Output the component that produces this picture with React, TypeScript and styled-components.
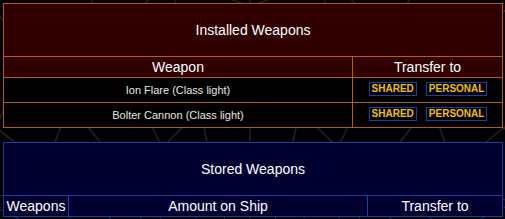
import styled, { createGlobalStyle } from "styled-components";

const GlobalStyle = createGlobalStyle`
  html, body {
    margin: 0;
    padding: 0;
    background: #000000;
  }
  body {
    font-family: "Liberation Sans", Arial, sans-serif;
    color: #ffffff;
  }
`;

const installed = [
  { name: "Ion Flare", size: "light" },
  { name: "Bolter Cannon", size: "light" },
];

const Page = styled.div`
  position: relative;
  width: 505px;
  height: 219px;
  padding: 3px;
  box-sizing: border-box;
  overflow: hidden;
`;

const Web = styled.svg`
  position: absolute;
  inset: 0;
  z-index: 0;
`;

const Content = styled.div`
  position: relative;
  z-index: 1;
  display: flex;
  flex-direction: column;
  gap: 14px;
`;

const Table = styled.table<{ $tone: "red" | "blue" }>`
  width: 500px;
  border-collapse: collapse;
  table-layout: fixed;
  background: ${(p) => (p.$tone === "red" ? "#300000" : "#000030")};
  border: 1px solid ${(p) => (p.$tone === "red" ? "#b4600c" : "#1440a8")};

  th,
  td {
    border: 1px solid ${(p) => (p.$tone === "red" ? "#b4600c" : "#1440a8")};
    padding: 0;
    text-align: center;
    font-weight: normal;
  }
`;

const Title = styled.th`
  height: 52px;
  font-size: 14px;
  padding-top: 2px;
`;

const Head = styled.th`
  height: 20px;
  font-size: 14px;
`;

const Row = styled.tr`
  background: #000000;
`;

const Cell = styled.td`
  height: 24px;
  font-size: 11px;
  color: #e6e6e6;
`;

const Buttons = styled.div`
  display: flex;
  justify-content: center;
  gap: 9px;
  padding-left: 1px;
  margin-top: -2px;
`;

const Button = styled.button`
  height: 14px;
  padding: 0 2px;
  background: #000000;
  border: 1px solid #1440a8;
  color: #f0c000;
  font-family: "Liberation Sans", Arial, sans-serif;
  font-weight: bold;
  font-size: 10px;
  line-height: 12px;
  cursor: pointer;
`;

const spokes = Array.from({ length: 28 }, (_, i) => (i * Math.PI * 2) / 28);
const rings = [60, 110, 165, 225, 290, 360, 440];

export default function App() {
  const cx = 250;
  const cy = 330;
  return (
    <>
      <GlobalStyle />
      <Page>
        <Web width="505" height="219" viewBox="0 0 505 219">
          <g stroke="#2a2a2a" strokeWidth="1.2" fill="none">
            {spokes.map((a, i) => (
              <line
                key={i}
                x1={cx}
                y1={cy}
                x2={cx + Math.cos(a) * 600}
                y2={cy + Math.sin(a) * 600}
              />
            ))}
            {rings.map((r, j) => (
              <polygon
                key={j}
                points={spokes
                  .map((a, i) => {
                    const rr = r * (i % 2 ? 0.9 : 1);
                    return `${cx + Math.cos(a) * rr},${cy + Math.sin(a) * rr}`;
                  })
                  .join(" ")}
              />
            ))}
          </g>
        </Web>
        <Content>
          <Table $tone="red">
            <colgroup>
              <col style={{ width: 349 }} />
              <col />
            </colgroup>
            <thead>
              <tr>
                <Title colSpan={2}>Installed Weapons</Title>
              </tr>
              <tr>
                <Head>Weapon</Head>
                <Head>Transfer to</Head>
              </tr>
            </thead>
            <tbody>
              {installed.map((w) => (
                <Row key={w.name}>
                  <Cell>
                    {w.name} (Class {w.size})
                  </Cell>
                  <Cell>
                    <Buttons>
                      <Button>SHARED</Button>
                      <Button>PERSONAL</Button>
                    </Buttons>
                  </Cell>
                </Row>
              ))}
            </tbody>
          </Table>
          <Table $tone="blue">
            <colgroup>
              <col style={{ width: 65 }} />
              <col style={{ width: 299 }} />
              <col />
            </colgroup>
            <thead>
              <tr>
                <Title colSpan={3}>Stored Weapons</Title>
              </tr>
              <tr>
                <Head>Weapons</Head>
                <Head>Amount on Ship</Head>
                <Head>Transfer to</Head>
              </tr>
            </thead>
          </Table>
        </Content>
      </Page>
    </>
  );
}
